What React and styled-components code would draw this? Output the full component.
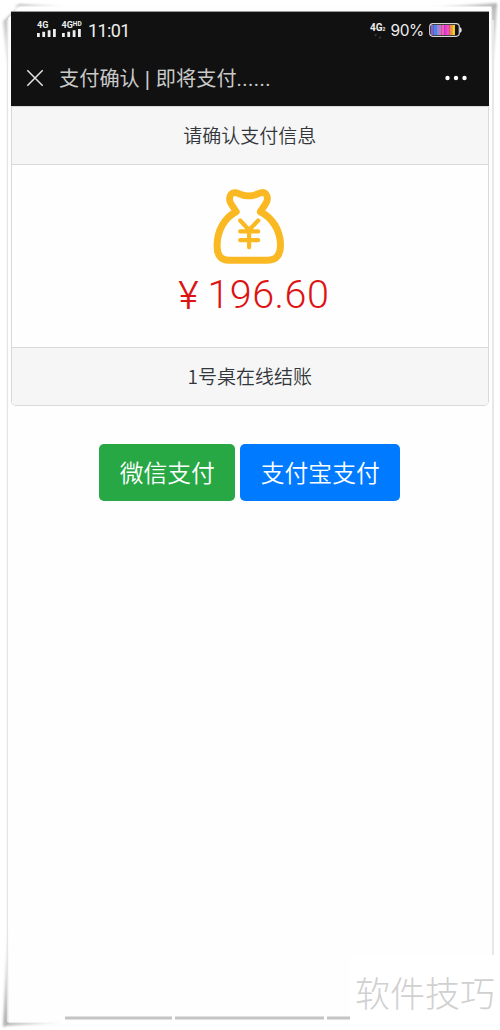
/**
 * Payment confirmation screen, shown inside a curled paper frame
 */
import React from 'react';
import styled, { createGlobalStyle } from 'styled-components';

const COLORS = {
  bar: '#111111',
  panel: '#f6f6f6',
  border: '#d9d9d9',
  text: '#33373b',
  price: '#dc1414',
  gold: '#fab923',
  green: '#28a745',
  blue: '#007bff',
};

const BATTERY = ['#8a5fd0', '#4d86ee', '#7795ee', '#d66fc0', '#ef62b8', '#e43be0', '#f052b8', '#f58a4e', '#fbd12e'];

const App = () => (
  <>
    <GlobalStyle />
    <Page>
      <PaperFrame />
      <Screen>
        <StatusBar>
          <Signals>
            <Signal label="4G" />
            <Signal label="4G" suffix="HD" />
            <Clock>11:01</Clock>
          </Signals>
          <Power>
            <Network>
              <span>
                4G<small>2</small>
              </span>
              <Arrows viewBox="0 0 8 5">
                <path d="M0 0h3.2L1.6 3zM4.4 4.5h3.2L6 1.5z" />
              </Arrows>
            </Network>
            <Percent>90%</Percent>
            <Battery />
          </Power>
        </StatusBar>
        <NavBar>
          <CloseIcon viewBox="0 0 18 18">
            <path d="M1.3 1.3l15.4 15.4M16.7 1.3L1.3 16.7" />
          </CloseIcon>
          <Title>
            支付确认 <Divider>|</Divider> 即将支付<Ellipsis>......</Ellipsis>
          </Title>
          <MoreIcon viewBox="0 0 22 6">
            <circle cx="2.5" cy="3" r="2.2" />
            <circle cx="11" cy="3" r="2.2" />
            <circle cx="19.5" cy="3" r="2.2" />
          </MoreIcon>
        </NavBar>
        <Card>
          <CardHeader>请确认支付信息</CardHeader>
          <CardBody>
            <MoneyBag />
            <Price>
              <Yen>¥</Yen>
              196.60
            </Price>
          </CardBody>
          <CardFooter>1号桌在线结账</CardFooter>
        </Card>
        <Actions>
          <PayButton $color={COLORS.green} $width={136}>微信支付</PayButton>
          <PayButton $color={COLORS.blue} $width={160}>支付宝支付</PayButton>
        </Actions>
      </Screen>
      <Watermark>软件技巧</Watermark>
    </Page>
  </>
);

const Signal = ({ label, suffix }) => (
  <SignalBox>
    <SignalLabel>
      {label}
      {suffix && <sup>{suffix}</sup>}
    </SignalLabel>
    <SignalBars viewBox="0 0 19 8">
      <path d="M0 4h2.8v4H0zM5.3 2.7h2.8V8H5.3zM10.7 1.2h2.8V8h-2.8zM16 0h2.8v8H16z" />
    </SignalBars>
  </SignalBox>
);

const Battery = () => (
  <BatteryIcon viewBox="0 0 33 14">
    <rect x="0.7" y="0.7" width="29.6" height="12.6" rx="3.2" fill="none" stroke="#d8d4da" strokeWidth="1.2" />
    <path d="M31 4.2q1.7 0 1.7 2.8T31 9.8z" fill="#e5e5e5" />
    {BATTERY.map((color, i) => (
      <rect key={i} x={2 + i * 2.65} y="2" width="2.75" height="10" fill={color} />
    ))}
  </BatteryIcon>
);

const MoneyBag = () => (
  <BagIcon viewBox="0 0 72 76">
    <path
      d="M23 22.5L17.9 14.5C16.3 11.6 16.2 7.8 18 5.3C19.8 3 23 3.2 25.6 4.6C32 7.6 39 7.6 45.3 4.6C48 3.3 51.3 3 53 5.3C54.9 7.8 54.5 11.6 52.8 14.5L47.5 22.5"
      strokeWidth="6.8"
    />
    <path
      d="M23 22.8C11 29 4.3 42 4.1 56C3.8 65 7 71.3 16 71.3H54.5C64 71.3 67.8 65 67.5 55.5C67.2 42 60 29 47.5 22.8"
      strokeWidth="7"
    />
    <path d="M27.2 31.5L36.1 41L45.2 31.5M27.2 42.4h18M27.2 51.2h18M36.1 42v16.3" strokeWidth="4.2" />
  </BagIcon>
);

const PaperFrame = () => (
  <FrameArt viewBox="0 0 500 1030">
    <defs>
      <filter id="soft" x="-20%" y="-20%" width="140%" height="140%">
        <feGaussianBlur stdDeviation="1.1" />
      </filter>
      <linearGradient id="fadeRight">
        <stop offset="0" stopColor="#999" />
        <stop offset="1" stopColor="#999" stopOpacity="0" />
      </linearGradient>
      <linearGradient id="fadeLeft">
        <stop offset="0" stopColor="#999" stopOpacity="0" />
        <stop offset="1" stopColor="#999" />
      </linearGradient>
      <linearGradient id="fadeDown" x2="0" y2="1">
        <stop offset="0" stopColor="#999" />
        <stop offset="1" stopColor="#999" stopOpacity="0" />
      </linearGradient>
      <linearGradient id="fadeUp" x2="0" y2="1">
        <stop offset="0" stopColor="#999" stopOpacity="0" />
        <stop offset="1" stopColor="#888" />
      </linearGradient>
    </defs>
    <g filter="url(#soft)" opacity="0.7">
      <path d="M20 4L75 6.5H14z" fill="url(#fadeRight)" />
      <path d="M3 21L18 7L9 20V70H7z" fill="url(#fadeDown)" />
      <path d="M425 7L497 3V8H425z" fill="url(#fadeLeft)" />
      <path d="M491 7L497 3L493 80H492z" fill="url(#fadeDown)" />
      <path d="M7 930H9V1025L3 1027z" fill="url(#fadeUp)" />
      <path d="M4 1022H65V1023L4 1026z" fill="url(#fadeRight)" />
    </g>
    <path d="M7.5 20V1022" stroke="#e5e5e5" strokeWidth="1.4" />
    <path d="M8.3 18L20 6.5H491.5V1022.5H8.3z" fill="#fefefe" />
    <path d="M493 20V955" stroke="#e8e8e8" strokeWidth="2" />
    <path d="M65 1018H172M175 1018H324M327 1018H350" stroke="#c4c4c4" strokeWidth="3" />
  </FrameArt>
);

const GlobalStyle = createGlobalStyle`
  * {
    box-sizing: border-box;
  }
  body {
    margin: 0;
    background: #fff;
    font-family: Roboto, 'Noto Sans CJK SC', sans-serif;
  }
`;

const Page = styled.div`
  position: relative;
  display: flex;
  flex-direction: column;
  width: 500px;
  height: 1030px;
  padding: 11px 11.5px 0 11px;
  overflow: hidden;
`;

const FrameArt = styled.svg`
  position: absolute;
  left: 0;
  top: 0;
  width: 500px;
  height: 1030px;
`;

const Screen = styled.main`
  position: relative;
  display: flex;
  flex-direction: column;
  border-top: 1px solid #999;
`;

const StatusBar = styled.header`
  display: flex;
  justify-content: space-between;
  height: 38px;
  padding: 0 27px 0 26px;
  background: ${COLORS.bar};
  color: #eee;
`;

const Signals = styled.div`
  display: flex;
  align-items: center;
`;

const SignalBox = styled.div`
  display: flex;
  flex-direction: column;
  width: 24.5px;
  padding-bottom: 4px;
`;

const SignalLabel = styled.span`
  height: 8px;
  font: 700 9px/8px Roboto, sans-serif;
  white-space: nowrap;

  sup {
    font-size: 6.5px;
    line-height: 0;
    vertical-align: 2px;
  }
`;

const SignalBars = styled.svg`
  width: 19px;
  height: 8px;
  fill: #eee;
`;

const Clock = styled.span`
  margin-left: 2px;
  font: 400 18px/38px Roboto, sans-serif;
  letter-spacing: -0.6px;
`;

const Power = styled.div`
  display: flex;
  align-items: center;
`;

const Network = styled.div`
  display: flex;
  flex-direction: column;
  width: 20.5px;
  font: 700 10px/10px Roboto, sans-serif;

  small {
    font-size: 5px;
  }
`;

const Arrows = styled.svg`
  width: 8px;
  height: 5px;
  margin-left: 4px;
  fill: #333;
`;

const Percent = styled.span`
  width: 38px;
  font: 400 15.5px/38px Inter, sans-serif;
  letter-spacing: -0.4px;
`;

const BatteryIcon = styled.svg`
  width: 33px;
  height: 14px;
  margin-top: -2px;
`;

const NavBar = styled.nav`
  display: flex;
  align-items: center;
  height: 56px;
  padding: 0 22px 0 15px;
  background: ${COLORS.bar};
`;

const CloseIcon = styled.svg`
  width: 18px;
  height: 18px;
  fill: none;
  stroke: #e4e4e4;
  stroke-width: 1.5;
`;

const Title = styled.h1`
  flex: 1;
  margin: 0 0 0 15px;
  padding-top: 1px;
  color: #c9c9c9;
  font-size: 20.2px;
  font-weight: 400;
  line-height: 56px;
`;

const Divider = styled.span`
  padding-right: 0.8px;
  font-family: 'Liberation Sans', sans-serif;
`;

const Ellipsis = styled.span`
  letter-spacing: 0.4px;
`;

const MoreIcon = styled.svg`
  width: 22px;
  height: 6px;
  fill: #fff;
`;

const Card = styled.section`
  display: flex;
  flex-direction: column;
  height: 300px;
  border: 1px solid ${COLORS.border};
  border-radius: 0 0 5px 5px;
  overflow: hidden;
`;

const CardHeader = styled.div`
  height: 58px;
  padding-top: 1px;
  background: ${COLORS.panel};
  border-bottom: 1px solid ${COLORS.border};
  color: ${COLORS.text};
  font-size: 19px;
  font-weight: 350;
  line-height: 58px;
  text-align: center;
`;

const CardBody = styled.div`
  display: flex;
  flex: 1;
  flex-direction: column;
  align-items: center;
  padding-top: 24px;
`;

const BagIcon = styled.svg`
  width: 72px;
  height: 76px;
  margin-right: 2px;
  fill: none;
  stroke: ${COLORS.gold};
  stroke-linecap: round;
  stroke-linejoin: round;
`;

const Price = styled.div`
  display: flex;
  color: ${COLORS.price};
  font: 330 39.5px/60px Roboto, sans-serif;
  letter-spacing: 0.5px;
  margin-left: 8px;
`;

const Yen = styled.span`
  margin-right: 8px;
  font-family: Inter, sans-serif;
  font-size: 38.5px;
  line-height: 60px;
`;

const CardFooter = styled(CardHeader)`
  padding-top: 0;
  border-top: 1px solid ${COLORS.border};
  border-bottom: 0;
  font-family: 'Noto Sans CJK SC', sans-serif;
  line-height: 55px;
`;

const Actions = styled.div`
  display: flex;
  justify-content: center;
  gap: 5px;
  padding-top: 38px;
`;

const PayButton = styled.button`
  width: ${(p) => p.$width}px;
  height: 57px;
  padding: 0 0 2px;
  border: 0;
  border-radius: 5px;
  background: ${(p) => p.$color};
  color: #fff;
  font: 350 23.8px/55px 'Noto Sans CJK SC', sans-serif;
`;

const Watermark = styled.div`
  position: absolute;
  right: 0;
  bottom: 0;
  width: 150px;
  height: 74px;
  padding-left: 5px;
  background: #fff;
  color: #d0d0d0;
  font: 300 35px/72px 'Noto Sans CJK SC', sans-serif;
  white-space: nowrap;
`;

export default App;
